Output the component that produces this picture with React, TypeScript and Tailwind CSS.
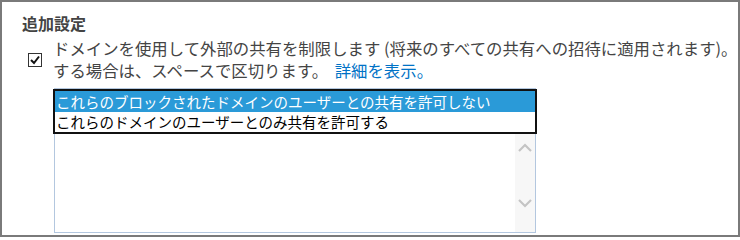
const font = { fontFamily: '"Noto Sans CJK JP", "Noto Sans", sans-serif' };

const options = [
  { label: "これらのブロックされたドメインのユーザーとの共有を許可しない", selected: true },
  { label: "これらのドメインのユーザーとのみ共有を許可する", selected: false },
];

const CheckBox = () => (
  <div className="mt-[16px] ml-[6px] h-[14px] w-[14px] shrink-0 border border-[#333] bg-white">
    <svg viewBox="0 0 12 12" className="h-full w-full" aria-hidden="true">
      <polyline points="2,6 5,9 10,2.5" fill="none" stroke="#111" strokeWidth="2" />
    </svg>
  </div>
);

const Chevron = ({ up }: { up?: boolean }) => (
  <svg viewBox="0 0 14 9" className="h-[9px] w-[14px]" aria-hidden="true">
    <polyline
      points={up ? "1,8 7,2 13,8" : "1,1 7,7 13,1"}
      fill="none"
      stroke="#c4c4c4"
      strokeWidth="2.2"
    />
  </svg>
);

export default function App() {
  return (
    <div
      className="flex h-[237px] w-[740px] flex-col border-2 border-[#7a7a7a] bg-white pl-[20px] text-[#444]"
      style={font}
    >
      <h2 className="pt-[10px] text-[16px] leading-[22px] font-bold">追加設定</h2>

      <div className="mt-[3px] flex gap-[11px]">
        <CheckBox />
        <div className="text-[16.4px] leading-[22px] whitespace-nowrap">
          <p>ドメインを使用して外部の共有を制限します (将来のすべての共有への招待に適用されます)。</p>
          <p>
            する場合は、スペースで区切ります。 <a className="ml-[3px] text-[#0072c6]">詳細を表示。</a>
          </p>
        </div>
      </div>

      <div className="relative mt-[7px] ml-[32px] flex h-[145px] w-[482px] justify-end border border-[#b3c7df] bg-white">
        <div className="flex w-[20px] flex-col items-center justify-end gap-[47px] bg-[#f7f7f7] pb-[24px]">
          <Chevron up />
          <Chevron />
        </div>

        <ul className="absolute top-0 left-[-2px] w-[484px] border-2 border-[#111] bg-white">
          {options.map((option) => (
            <li
              key={option.label}
              className={
                option.selected
                  ? "h-[21px] bg-[#2a9ad8] pl-[1px] text-[14.5px] leading-[21px] text-white"
                  : "h-[20px] pl-[1px] text-[14.5px] leading-[20px] text-black"
              }
            >
              {option.label}
            </li>
          ))}
        </ul>
      </div>
    </div>
  );
}
